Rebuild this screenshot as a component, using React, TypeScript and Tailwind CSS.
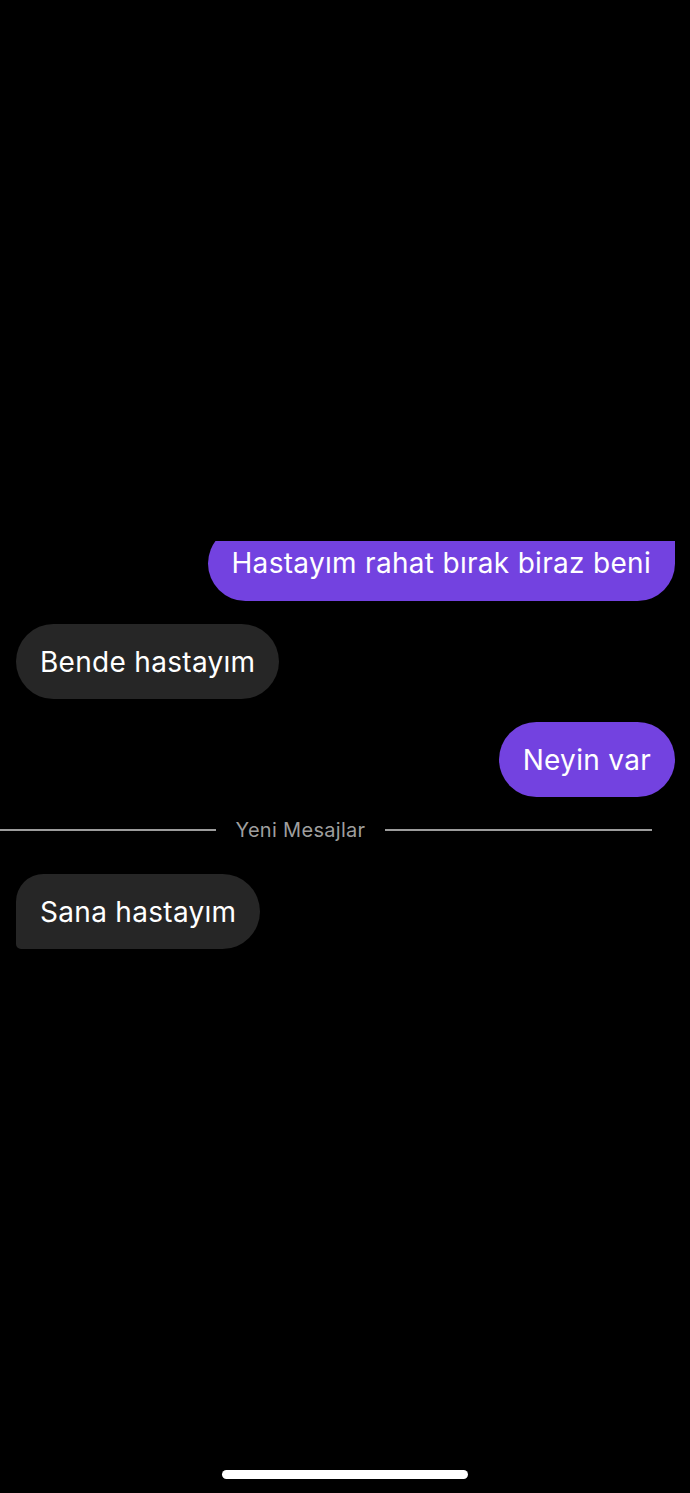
import React from "react";

const font = { fontFamily: "Inter, 'Noto Sans', 'Liberation Sans', sans-serif" };

export default function App() {
  return (
    <div className="w-[690px] h-[1493px] bg-black flex flex-col overflow-hidden" style={font}>
      <div className="h-[541px] shrink-0" />
      <div className="flex flex-col">
        {/* clipped first sent bubble */}
        <div className="h-[60px] overflow-hidden flex items-end justify-end pr-[15px]">
          <div className="h-[75px] shrink-0 bg-[#7342e0] text-white rounded-l-[38px] rounded-br-[38px] rounded-tr-none px-[24px] flex items-center text-[28px] leading-none tracking-[0.3px]">
            <span className="-translate-y-[1px]">Hastayım rahat bırak biraz beni</span>
          </div>
        </div>
        <div className="mt-[23px] flex pl-[16px]">
          <div className="h-[75px] bg-[#262626] text-white rounded-full px-[24px] flex items-center text-[28px] leading-none tracking-[0.3px]">
            Bende hastayım
          </div>
        </div>
        <div className="mt-[23px] flex justify-end pr-[15px]">
          <div className="h-[75px] bg-[#7342e0] text-white rounded-full px-[24px] flex items-center text-[28px] leading-none tracking-[0.3px]">
            Neyin var
          </div>
        </div>
        <div className="mt-[21px] h-[24px] flex items-center">
          <div className="w-[216px] h-[2px] bg-[#9c9c9c]" />
          <div className="w-[169px] text-center text-[20px] leading-none tracking-[0.3px] text-[#9e9e9e]">Yeni Mesajlar</div>
          <div className="w-[267px] h-[2px] bg-[#9c9c9c]" />
        </div>
        <div className="mt-[32px] flex pl-[16px]">
          <div className="h-[75px] bg-[#262626] text-white rounded-tl-[28px] rounded-bl-[5px] rounded-r-[38px] px-[24px] flex items-center text-[28px] leading-none tracking-[0.3px]">
            Sana hastayım
          </div>
        </div>
      </div>
      <div className="flex-1" />
      <div className="flex justify-center pb-[14px]">
        <div className="w-[246px] h-[9px] rounded-full bg-white" />
      </div>
    </div>
  );
}
